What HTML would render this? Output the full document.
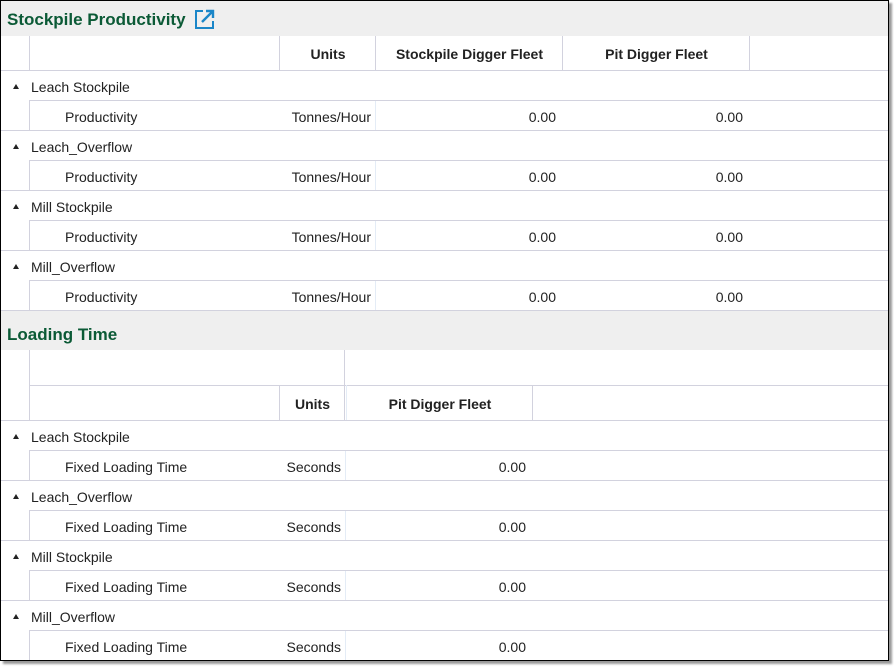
<!DOCTYPE html>
<html><head><style>
*{margin:0;padding:0;box-sizing:border-box}
body{width:894px;height:667px;background:#fff;position:relative;overflow:hidden;font-family:"Liberation Sans",sans-serif;font-size:14px;color:#222}
.frame{position:absolute;left:0;top:0;width:889px;height:661px;border:1px solid #000;box-shadow:3px 3px 2px #999;background:#fff;overflow:hidden}
.a{position:absolute}
.bar{position:absolute;left:0;width:888px;background:#efefef}
.title{position:absolute;left:6px;font-weight:bold;font-size:17px;color:#0b5a36}
.h{position:absolute;height:1px;background:#d2d2de}
.v{position:absolute;width:1px;background:#d2d2de}
.vl{position:absolute;width:1px;background:#e4ecf6}
.t{position:absolute;white-space:nowrap;line-height:16px}
.b{font-weight:bold}
.r{text-align:right}
.tri{position:absolute;width:0;height:0;border-left:3.5px solid transparent;border-right:3.5px solid transparent;border-bottom:5px solid #222}
</style></head><body><div class="frame">
<div class="bar" style="top:0;height:35px"></div>
<div class="title" style="top:9px">Stockpile Productivity</div>
<svg class="a" style="left:193px;top:7px" width="22" height="22" viewBox="0 0 22 22"><path d="M9 3H2v17h17v-7" fill="none" stroke="#1a86c8" stroke-width="2"/><path d="M8 14L18 4M12 3h7v7" fill="none" stroke="#1a86c8" stroke-width="2.4"/></svg>
<div class="v" style="left:28px;top:35px;height:35px"></div>
<div class="v" style="left:278px;top:35px;height:35px"></div>
<div class="v" style="left:374px;top:35px;height:35px"></div>
<div class="v" style="left:561px;top:35px;height:35px"></div>
<div class="v" style="left:748px;top:35px;height:35px"></div>
<div class="t b" style="left:279px;width:96px;text-align:center;top:45px">Units</div>
<div class="t b" style="left:375px;width:187px;text-align:center;top:45px">Stockpile Digger Fleet</div>
<div class="t b" style="left:562px;width:187px;text-align:center;top:45px">Pit Digger Fleet</div>
<div class="h" style="left:0;width:888px;top:69px"></div>

<div class="bar" style="top:309px;height:40px"></div>
<div class="title" style="top:324px">Loading Time</div>
<div class="v" style="left:28px;top:349px;height:70px"></div>
<div class="v" style="left:343px;top:349px;height:35px"></div>
<div class="h" style="left:28px;width:860px;top:384px"></div>
<div class="v" style="left:278px;top:384px;height:35px"></div>
<div class="v" style="left:343px;top:384px;height:35px"></div>
<div class="vl" style="left:345px;top:384px;height:35px"></div>
<div class="v" style="left:531px;top:384px;height:35px"></div>
<div class="t b" style="left:279px;width:65px;text-align:center;top:395px">Units</div>
<div class="t b" style="left:346px;width:186px;text-align:center;top:395px">Pit Digger Fleet</div>
<div class="h" style="left:0;width:888px;top:419px"></div>

<div id="rows"></div>
</div>
<script>
var html='';
var names=['Leach Stockpile','Leach_Overflow','Mill Stockpile','Mill_Overflow'];
function sec(y0,label,unit,ue,vals){
 for(var i=0;i<4;i++){var y=y0+i*60;
  html+='<div class="tri" style="left:12px;top:'+(y+13)+'px"></div>';
  html+='<div class="t" style="left:30px;top:'+(y+8)+'px">'+names[i]+'</div>';
  html+='<div class="h" style="left:28px;width:860px;top:'+(y+29)+'px"></div>';
  html+='<div class="v" style="left:28px;top:'+(y+30)+'px;height:30px"></div>';
  html+='<div class="vl" style="left:'+ue+'px;top:'+(y+30)+'px;height:30px"></div>';
  html+='<div class="t" style="left:64px;top:'+(y+38)+'px">'+label+'</div>';
  html+='<div class="t r" style="left:200px;width:'+(ue-4-200)+'px;top:'+(y+38)+'px">'+unit+'</div>';
  for(var j=0;j<vals.length;j++) html+='<div class="t r" style="left:'+(vals[j]-80)+'px;width:80px;top:'+(y+38)+'px">0.00</div>';
  html+='<div class="h" style="left:0;width:888px;top:'+(y+59)+'px"></div>';
 }}
sec(70,'Productivity','Tonnes/Hour',374,[555,742]);
sec(420,'Fixed Loading Time','Seconds',344,[525]);
document.getElementById('rows').outerHTML=html;
</script>
</body></html>
